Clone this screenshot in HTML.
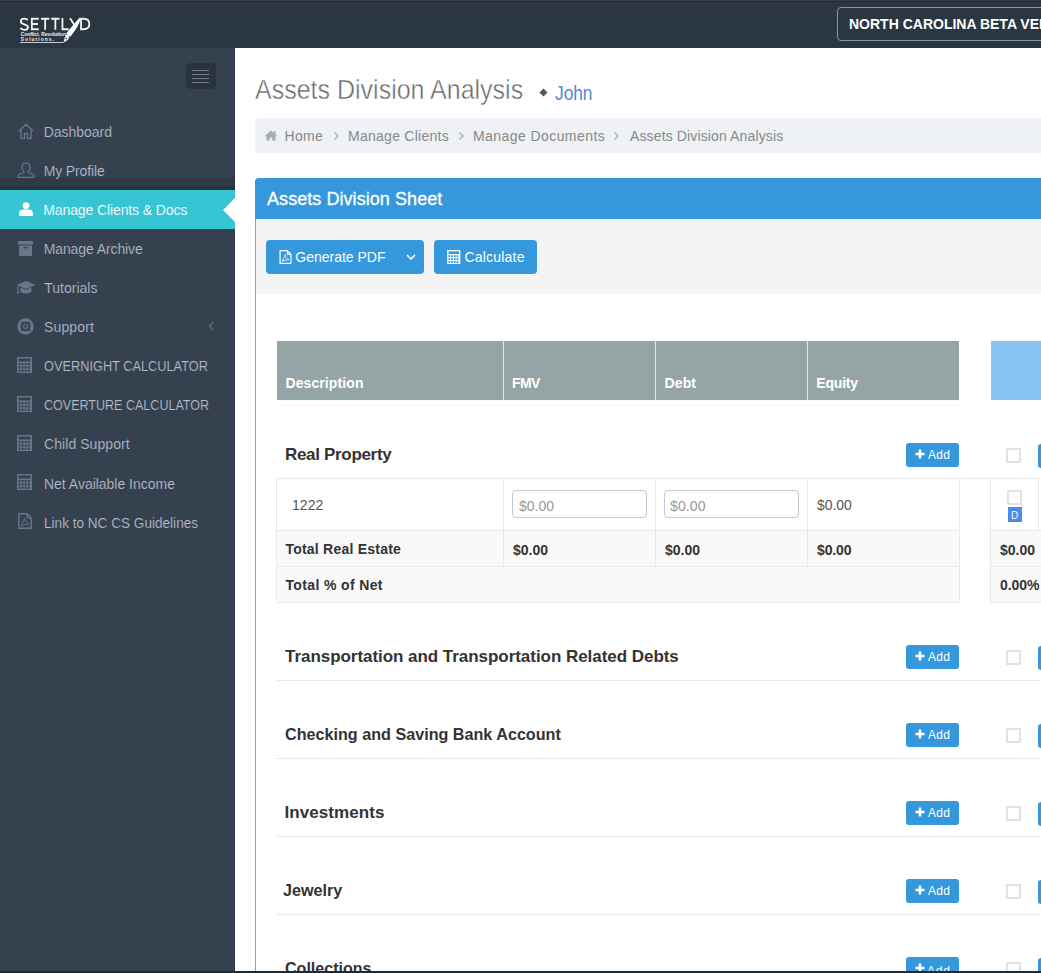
<!DOCTYPE html>
<html><head><meta charset="utf-8">
<style>
*{box-sizing:border-box;margin:0;padding:0}
html,body{width:1041px;height:973px;overflow:hidden;background:#fff}
body{position:relative;font-family:"Liberation Sans",sans-serif;font-size:14px;color:#333}
.a{position:absolute}
.t{position:absolute;white-space:nowrap;line-height:1}
svg{position:absolute;overflow:visible}
.hl{position:absolute;height:1px;background:#e8e9eb}
.vl{position:absolute;width:1px;background:#e8e9eb}
.btn{position:absolute;background:#3598dc;border-radius:4px}
.th{position:absolute;background:#95a5a6;top:341px;height:59px}
.thl{position:absolute;top:341px;height:59px;width:1px;background:#e4ebeb}
.add{position:absolute;left:906px;width:53px;height:24px;background:#3598dc;border-radius:3px}
.cb{position:absolute;width:15px;height:15px;border:2px solid #e2e2e2;background:#fff}
.bb{position:absolute;left:1038px;width:12px;height:24px;background:#3598dc;border-radius:3px}
.inp{position:absolute;width:135px;height:28px;border:1px solid #c2cad8;border-radius:4px;background:#fff}

</style></head>
<body>
<div class="a" style="left:0;top:0;width:1041px;height:48px;background:#2a3641"></div>
<div class="a" style="left:0;top:0;width:1041px;height:1px;background:#383c45"></div>
<div class="a" style="left:0;top:1px;width:1041px;height:1px;background:#24292f"></div>
<div class="a" style="left:0;top:2px;width:1041px;height:4px;background:#2f3640"></div>
<div class="a" style="left:837px;top:7px;width:260px;height:34px;border:1px solid #8d959e;border-radius:4px"></div>
<svg style="left:0;top:0" width="100" height="48">
<g stroke="#f2f4f6" stroke-width="1.8" fill="none">
<path d="M27.8 20.2 C26.8 19 25.5 18.6 24.2 18.6 C22 18.6 20.8 19.9 20.8 21.5 C20.8 23.2 22.3 23.8 24.3 24.3 C26.6 24.9 28 25.6 28 27.2 C28 28.8 26.5 29.8 24.3 29.8 C22.6 29.8 21.2 29.1 20.3 28"/>
<path d="M38.7 18.75 H31.85 V29.25 H38.7 M31.85 24 H38"/>
<path d="M41 18.75 H49.3 M45.15 18.75 V29.7"/>
<path d="M51.2 18.75 H59.5 M55.35 18.75 V29.7"/>
<path d="M62.45 18 V29.25 H68.6"/>
<path d="M70 18.2 L74.6 25.2"/>
<path d="M81.05 18.75 V29.25 H83.5 C87.2 29.25 89.3 27 89.3 24 C89.3 21 87.2 18.75 83.5 18.75 Z"/>
</g>
<path d="M79.3 17.8 L80.6 18.5 C80 22 77.5 28 70.6 36.4 L66.1 33.7 C71 27.5 77 21 79.3 17.8 Z" fill="#fff"/>
<path d="M66.8 34.2 L69.6 36.2 L68 39.8 L63.3 42.8 L64.8 37.5 Z" fill="#fff"/>
<circle cx="66.3" cy="38.5" r="0.8" fill="#2a3641"/>
<text x="20.8" y="35.8" font-family="Liberation Sans" font-size="4.9" font-weight="bold" fill="#f0f2f4" letter-spacing="-0.05">Conflict. Resolution.</text>
<text x="20.8" y="40.7" font-family="Liberation Sans" font-size="4.9" font-weight="bold" fill="#f0f2f4" letter-spacing="1.05">Solutions.</text>
<rect x="20" y="42" width="43.5" height="0.9" fill="#d9dde2"/>
</svg>
<div class="a" style="left:0;top:48px;width:235px;height:925px;background:#364150"></div>
<div class="a" style="left:234px;top:48px;width:1px;height:925px;background:#2f3946"></div>
<div class="a" style="left:186px;top:63px;width:30px;height:26px;background:#2a3441;border-radius:4px"></div>
<div class="a" style="left:192px;top:70px;width:17px;height:1px;background:#737e8c"></div>
<div class="a" style="left:192px;top:74px;width:17px;height:1px;background:#737e8c"></div>
<div class="a" style="left:192px;top:78px;width:17px;height:1px;background:#737e8c"></div>
<div class="a" style="left:192px;top:82px;width:17px;height:1px;background:#737e8c"></div>
<div class="a" style="left:0;top:177px;width:235px;height:9px;background:#303a47"></div>
<div class="a" style="left:0;top:186px;width:235px;height:4px;background:#29333f"></div>
<div class="a" style="left:0;top:190px;width:235px;height:39px;background:#36c6d3"></div>
<div class="a" style="left:0;top:229px;width:235px;height:1px;background:#2b4a58"></div>
<svg style="left:222px;top:198px" width="13" height="24"><path d="M13 0 L1 12 L13 24 Z" fill="#fff"/></svg>
<svg style="left:18px;top:123px" width="16" height="16"><path d="M1 8 L8 1.2 L15 8 M3 6.5 V15.3 H6.5 V10.5 H9.5 V15.3 H13 V6.5" stroke="#6a7686" stroke-width="1.3" fill="none"/></svg>
<svg style="left:17px;top:162px" width="18" height="16"><path d="M9 1 C6.3 1 5 3 5 5.3 C5 7.5 6 9 7 9.8 L7 10.5 C3.5 11.2 1 12.3 1 14.5 V15.3 H17 V14.5 C17 12.3 14.5 11.2 11 10.5 L11 9.8 C12 9 13 7.5 13 5.3 C13 3 11.7 1 9 1 Z" stroke="#6a7686" stroke-width="1.2" fill="none"/></svg>
<svg style="left:19px;top:202px" width="14" height="14"><circle cx="7" cy="3.6" r="3.4" fill="#fff"/><path d="M0 14 V11.2 C0 8.8 2 7.4 4.2 7.4 H9.8 C12 7.4 14 8.8 14 11.2 V14 Z" fill="#fff"/></svg>
<svg style="left:17.5px;top:241px" width="15" height="15"><rect x="0" y="0" width="15" height="3.5" fill="#6a7686"/><rect x="1" y="4.5" width="13" height="10.5" fill="#6a7686"/><rect x="5.5" y="6" width="4" height="1.3" fill="#364150"/></svg>
<svg style="left:16px;top:280px" width="20" height="15"><path d="M10 1 L19.5 5 L10 9 L0.5 5 Z" fill="#6a7686"/><path d="M4.5 7.5 V11 C4.5 12.5 7 13.5 10 13.5 C13 13.5 15.5 12.5 15.5 11 V7.5 L10 9.8 Z" fill="#6a7686"/><path d="M2 5.5 V11.5" stroke="#6a7686" stroke-width="1"/><circle cx="2" cy="12.5" r="1.2" fill="#6a7686"/></svg>
<svg style="left:16.5px;top:318px" width="17" height="17"><circle cx="8.5" cy="8.5" r="6.6" stroke="#6a7686" stroke-width="3.2" fill="none"/><circle cx="8.5" cy="8.5" r="2" stroke="#6a7686" stroke-width="1.2" fill="none"/><path d="M4 4 L6.5 6.5 M13 4 L10.5 6.5 M4 13 L6.5 10.5 M13 13 L10.5 10.5" stroke="#364150" stroke-width="1.4"/></svg>
<svg style="left:208px;top:321px" width="7" height="10"><path d="M5.5 1 L1.5 5 L5.5 9" stroke="#606c7b" stroke-width="1.3" fill="none"/></svg>
<svg style="left:17px;top:357px" width="15" height="16"><rect x="0" y="0" width="15" height="16" fill="#6a7686"/><rect x="1.5" y="1.5" width="12" height="3" fill="#364150"/><rect x="1.5" y="6.0" width="2" height="2.2" fill="#364150"/><rect x="4.6" y="6.0" width="2" height="2.2" fill="#364150"/><rect x="7.7" y="6.0" width="2" height="2.2" fill="#364150"/><rect x="10.8" y="6.0" width="2" height="2.2" fill="#364150"/><rect x="1.5" y="9.3" width="2" height="2.2" fill="#364150"/><rect x="4.6" y="9.3" width="2" height="2.2" fill="#364150"/><rect x="7.7" y="9.3" width="2" height="2.2" fill="#364150"/><rect x="10.8" y="9.3" width="2" height="2.2" fill="#364150"/><rect x="1.5" y="12.6" width="2" height="2.2" fill="#364150"/><rect x="4.6" y="12.6" width="2" height="2.2" fill="#364150"/><rect x="7.7" y="12.6" width="2" height="2.2" fill="#364150"/><rect x="10.8" y="12.6" width="2" height="2.2" fill="#364150"/></svg>
<svg style="left:17px;top:396px" width="15" height="16"><rect x="0" y="0" width="15" height="16" fill="#6a7686"/><rect x="1.5" y="1.5" width="12" height="3" fill="#364150"/><rect x="1.5" y="6.0" width="2" height="2.2" fill="#364150"/><rect x="4.6" y="6.0" width="2" height="2.2" fill="#364150"/><rect x="7.7" y="6.0" width="2" height="2.2" fill="#364150"/><rect x="10.8" y="6.0" width="2" height="2.2" fill="#364150"/><rect x="1.5" y="9.3" width="2" height="2.2" fill="#364150"/><rect x="4.6" y="9.3" width="2" height="2.2" fill="#364150"/><rect x="7.7" y="9.3" width="2" height="2.2" fill="#364150"/><rect x="10.8" y="9.3" width="2" height="2.2" fill="#364150"/><rect x="1.5" y="12.6" width="2" height="2.2" fill="#364150"/><rect x="4.6" y="12.6" width="2" height="2.2" fill="#364150"/><rect x="7.7" y="12.6" width="2" height="2.2" fill="#364150"/><rect x="10.8" y="12.6" width="2" height="2.2" fill="#364150"/></svg>
<svg style="left:17px;top:435px" width="15" height="16"><rect x="0" y="0" width="15" height="16" fill="#6a7686"/><rect x="1.5" y="1.5" width="12" height="3" fill="#364150"/><rect x="1.5" y="6.0" width="2" height="2.2" fill="#364150"/><rect x="4.6" y="6.0" width="2" height="2.2" fill="#364150"/><rect x="7.7" y="6.0" width="2" height="2.2" fill="#364150"/><rect x="10.8" y="6.0" width="2" height="2.2" fill="#364150"/><rect x="1.5" y="9.3" width="2" height="2.2" fill="#364150"/><rect x="4.6" y="9.3" width="2" height="2.2" fill="#364150"/><rect x="7.7" y="9.3" width="2" height="2.2" fill="#364150"/><rect x="10.8" y="9.3" width="2" height="2.2" fill="#364150"/><rect x="1.5" y="12.6" width="2" height="2.2" fill="#364150"/><rect x="4.6" y="12.6" width="2" height="2.2" fill="#364150"/><rect x="7.7" y="12.6" width="2" height="2.2" fill="#364150"/><rect x="10.8" y="12.6" width="2" height="2.2" fill="#364150"/></svg>
<svg style="left:17px;top:474px" width="15" height="16"><rect x="0" y="0" width="15" height="16" fill="#6a7686"/><rect x="1.5" y="1.5" width="12" height="3" fill="#364150"/><rect x="1.5" y="6.0" width="2" height="2.2" fill="#364150"/><rect x="4.6" y="6.0" width="2" height="2.2" fill="#364150"/><rect x="7.7" y="6.0" width="2" height="2.2" fill="#364150"/><rect x="10.8" y="6.0" width="2" height="2.2" fill="#364150"/><rect x="1.5" y="9.3" width="2" height="2.2" fill="#364150"/><rect x="4.6" y="9.3" width="2" height="2.2" fill="#364150"/><rect x="7.7" y="9.3" width="2" height="2.2" fill="#364150"/><rect x="10.8" y="9.3" width="2" height="2.2" fill="#364150"/><rect x="1.5" y="12.6" width="2" height="2.2" fill="#364150"/><rect x="4.6" y="12.6" width="2" height="2.2" fill="#364150"/><rect x="7.7" y="12.6" width="2" height="2.2" fill="#364150"/><rect x="10.8" y="12.6" width="2" height="2.2" fill="#364150"/></svg>
<svg style="left:18px;top:513px" width="14" height="16" viewBox="0 0 14 16"><path d="M0.8 0.8 H9 L13.2 5 V15.2 H0.8 Z" stroke="#6a7686" stroke-width="1.4" fill="none"/><path d="M9 0.8 V5 H13.2" stroke="#6a7686" stroke-width="1.2" fill="none"/><path d="M3 13 C4 11 6 8 6.5 5.5 C7 8 9 10.5 11 11 C9 11 6 11.8 3 13 Z" stroke="#6a7686" stroke-width="1" fill="none"/></svg>
<svg style="left:539px;top:88px" width="9" height="9"><path d="M4.5 0.5 L8.5 4.5 L4.5 8.5 L0.5 4.5 Z" fill="#555"/></svg>
<div class="a" style="left:255px;top:118px;width:820px;height:35px;background:#eef1f5;border-radius:4px"></div>
<svg style="left:265px;top:130px" width="13" height="11"><path d="M6 0.6 L12 5.8 L10.6 5.8 L10.6 10.6 L7.3 10.6 L7.3 7.6 L4.7 7.6 L4.7 10.6 L1.4 10.6 L1.4 5.8 L0 5.8 Z" fill="#aaa"/><rect x="8.6" y="1.2" width="2" height="3.2" fill="#aaa"/></svg>
<svg style="left:333px;top:131px" width="7" height="10"><path d="M1.5 1.5 L5 5 L1.5 8.5" stroke="#aaa" stroke-width="1.2" fill="none"/></svg>
<svg style="left:458px;top:131px" width="7" height="10"><path d="M1.5 1.5 L5 5 L1.5 8.5" stroke="#aaa" stroke-width="1.2" fill="none"/></svg>
<svg style="left:613px;top:131px" width="7" height="10"><path d="M1.5 1.5 L5 5 L1.5 8.5" stroke="#aaa" stroke-width="1.2" fill="none"/></svg>
<div class="a" style="left:255px;top:178px;width:820px;height:820px;border:1px solid #8ea4b7;border-radius:4px 4px 0 0"></div>
<div class="a" style="left:255px;top:178px;width:820px;height:41px;background:#3598dc;border-radius:4px 4px 0 0"></div>
<div class="a" style="left:256px;top:219px;width:820px;height:75px;background:#f4f4f4"></div>
<div class="btn" style="left:266px;top:240px;width:158px;height:34px"></div>
<div class="btn" style="left:434px;top:240px;width:103px;height:34px"></div>
<svg style="left:279px;top:250px" width="13" height="14" viewBox="0 0 14 16"><path d="M0.8 0.8 H9 L13.2 5 V15.2 H0.8 Z" stroke="#fff" stroke-width="1.4" fill="none"/><path d="M9 0.8 V5 H13.2" stroke="#fff" stroke-width="1.2" fill="none"/><path d="M3 13 C4 11 6 8 6.5 5.5 C7 8 9 10.5 11 11 C9 11 6 11.8 3 13 Z" stroke="#fff" stroke-width="1" fill="none"/></svg>
<svg style="left:406px;top:254px" width="10" height="7"><path d="M1 1 L5 5 L9 1" stroke="#fff" stroke-width="1.6" fill="none"/></svg>
<svg style="left:447px;top:250px" width="13.5" height="14" viewBox="0 0 15 16"><rect x="0" y="0" width="15" height="16" fill="#fff"/><rect x="1.5" y="1.5" width="12" height="3" fill="#3598dc"/><rect x="1.5" y="6.0" width="2" height="2.2" fill="#3598dc"/><rect x="4.6" y="6.0" width="2" height="2.2" fill="#3598dc"/><rect x="7.7" y="6.0" width="2" height="2.2" fill="#3598dc"/><rect x="10.8" y="6.0" width="2" height="2.2" fill="#3598dc"/><rect x="1.5" y="9.3" width="2" height="2.2" fill="#3598dc"/><rect x="4.6" y="9.3" width="2" height="2.2" fill="#3598dc"/><rect x="7.7" y="9.3" width="2" height="2.2" fill="#3598dc"/><rect x="10.8" y="9.3" width="2" height="2.2" fill="#3598dc"/><rect x="1.5" y="12.6" width="2" height="2.2" fill="#3598dc"/><rect x="4.6" y="12.6" width="2" height="2.2" fill="#3598dc"/><rect x="7.7" y="12.6" width="2" height="2.2" fill="#3598dc"/><rect x="10.8" y="12.6" width="2" height="2.2" fill="#3598dc"/></svg>
<div class="th" style="left:277px;width:682px"></div>
<div class="thl" style="left:503px"></div>
<div class="thl" style="left:655px"></div>
<div class="thl" style="left:807px"></div>
<div class="a" style="left:991px;top:341px;width:60px;height:59px;background:#89c4f4"></div>
<div class="a" style="left:280px;top:405px;width:679px;height:1px;background:#f6f7f8"></div>
<div class="a" style="left:277px;top:530px;width:682px;height:72px;background:#f9f9f9"></div>
<div class="a" style="left:991px;top:530px;width:60px;height:72px;background:#f9f9f9"></div>
<div class="hl" style="left:276px;top:478px;width:764px"></div>
<div class="hl" style="left:276px;top:530px;width:682px"></div>
<div class="hl" style="left:991px;top:530px;width:60px"></div>
<div class="hl" style="left:276px;top:566px;width:682px"></div>
<div class="hl" style="left:991px;top:566px;width:60px"></div>
<div class="hl" style="left:276px;top:602px;width:682px"></div>
<div class="hl" style="left:991px;top:602px;width:60px"></div>
<div class="vl" style="left:276px;top:478px;height:125px"></div>
<div class="vl" style="left:503px;top:478px;height:88px"></div>
<div class="vl" style="left:655px;top:478px;height:88px"></div>
<div class="vl" style="left:807px;top:478px;height:88px"></div>
<div class="vl" style="left:959px;top:478px;height:125px"></div>
<div class="vl" style="left:990px;top:478px;height:125px"></div>
<div class="vl" style="left:1038px;top:478px;height:52px"></div>
<div class="inp" style="left:512px;top:490px"></div>
<div class="inp" style="left:664px;top:490px"></div>
<div class="cb" style="left:1007px;top:490px"></div>
<div class="a" style="left:1008px;top:507px;width:14px;height:15px;background:#4a8ae8"></div>
<div class="add" style="top:443px"></div>
<svg style="left:915px;top:449px" width="10" height="10"><path d="M5 0.5 V9.5 M0.5 5 H9.5" stroke="#fff" stroke-width="2.6"/></svg>
<div class="cb" style="left:1006px;top:448px"></div>
<div class="bb" style="top:444px"></div>
<div class="add" style="top:645px"></div>
<svg style="left:915px;top:651px" width="10" height="10"><path d="M5 0.5 V9.5 M0.5 5 H9.5" stroke="#fff" stroke-width="2.6"/></svg>
<div class="cb" style="left:1006px;top:650px"></div>
<div class="bb" style="top:646px"></div>
<div class="add" style="top:723px"></div>
<svg style="left:915px;top:729px" width="10" height="10"><path d="M5 0.5 V9.5 M0.5 5 H9.5" stroke="#fff" stroke-width="2.6"/></svg>
<div class="cb" style="left:1006px;top:728px"></div>
<div class="bb" style="top:724px"></div>
<div class="add" style="top:801px"></div>
<svg style="left:915px;top:807px" width="10" height="10"><path d="M5 0.5 V9.5 M0.5 5 H9.5" stroke="#fff" stroke-width="2.6"/></svg>
<div class="cb" style="left:1006px;top:806px"></div>
<div class="bb" style="top:802px"></div>
<div class="add" style="top:879px"></div>
<svg style="left:915px;top:885px" width="10" height="10"><path d="M5 0.5 V9.5 M0.5 5 H9.5" stroke="#fff" stroke-width="2.6"/></svg>
<div class="cb" style="left:1006px;top:884px"></div>
<div class="bb" style="top:880px"></div>
<div class="add" style="top:957px"></div>
<svg style="left:915px;top:963px" width="10" height="10"><path d="M5 0.5 V9.5 M0.5 5 H9.5" stroke="#fff" stroke-width="2.6"/></svg>
<div class="cb" style="left:1006px;top:962px"></div>
<div class="bb" style="top:958px"></div>
<div class="hl" style="left:276px;top:680px;width:764px"></div>
<div class="hl" style="left:276px;top:758px;width:764px"></div>
<div class="hl" style="left:276px;top:836px;width:764px"></div>
<div class="hl" style="left:276px;top:914px;width:764px"></div>

<div class="t" id="beta" style="left:849.00px;top:17.00px;font-size:14px;font-weight:bold;color:#fff;letter-spacing:0.000px;transform-origin:0 0;transform:scaleX(1.0000);">NORTH CAROLINA BETA VERSION</div>
<div class="t" id="s0" style="left:43.64px;top:125.05px;font-size:14px;font-weight:normal;color:#b4bcc8;letter-spacing:-0.025px;transform-origin:0 0;transform:scaleX(1.0000);-webkit-text-stroke:0.15px #364150">Dashboard</div>
<div class="t" id="s1" style="left:43.64px;top:164.00px;font-size:14px;font-weight:normal;color:#b4bcc8;letter-spacing:-0.111px;transform-origin:0 0;transform:scaleX(1.0000);-webkit-text-stroke:0.15px #364150">My Profile</div>
<div class="t" id="s2" style="left:43.28px;top:203.00px;font-size:14px;font-weight:normal;color:#fff;letter-spacing:-0.110px;transform-origin:0 0;transform:scaleX(1.0000);-webkit-text-stroke:0.15px #36c6d3">Manage Clients &amp; Docs</div>
<div class="t" id="s3" style="left:43.64px;top:242.00px;font-size:14px;font-weight:normal;color:#b4bcc8;letter-spacing:-0.095px;transform-origin:0 0;transform:scaleX(1.0000);-webkit-text-stroke:0.15px #364150">Manage Archive</div>
<div class="t" id="s4" style="left:44.28px;top:281.00px;font-size:14px;font-weight:normal;color:#b4bcc8;letter-spacing:-0.006px;transform-origin:0 0;transform:scaleX(1.0000);-webkit-text-stroke:0.15px #364150">Tutorials</div>
<div class="t" id="s5" style="left:44.00px;top:320.00px;font-size:14px;font-weight:normal;color:#b4bcc8;letter-spacing:0.149px;transform-origin:0 0;transform:scaleX(1.0000);-webkit-text-stroke:0.15px #364150">Support</div>
<div class="t" id="s6" style="left:44.00px;top:359.00px;font-size:14px;font-weight:normal;color:#b4bcc8;letter-spacing:0.000px;transform-origin:0 0;transform:scaleX(0.9119);-webkit-text-stroke:0.15px #364150">OVERNIGHT CALCULATOR</div>
<div class="t" id="s7" style="left:44.00px;top:398.00px;font-size:14px;font-weight:normal;color:#b4bcc8;letter-spacing:0.000px;transform-origin:0 0;transform:scaleX(0.8954);-webkit-text-stroke:0.15px #364150">COVERTURE CALCULATOR</div>
<div class="t" id="s8" style="left:44.00px;top:437.00px;font-size:14px;font-weight:normal;color:#b4bcc8;letter-spacing:0.069px;transform-origin:0 0;transform:scaleX(1.0000);-webkit-text-stroke:0.15px #364150">Child Support</div>
<div class="t" id="s9" style="left:44.00px;top:476.50px;font-size:14px;font-weight:normal;color:#b4bcc8;letter-spacing:-0.018px;transform-origin:0 0;transform:scaleX(1.0000);-webkit-text-stroke:0.15px #364150">Net Available Income</div>
<div class="t" id="s10" style="left:44.00px;top:515.50px;font-size:14px;font-weight:normal;color:#b4bcc8;letter-spacing:0.000px;transform-origin:0 0;transform:scaleX(0.9704);-webkit-text-stroke:0.15px #364150">Link to NC CS Guidelines</div>
<div class="t" id="title" style="left:255.00px;top:75.50px;font-size:27.5px;font-weight:normal;color:#666;letter-spacing:0.000px;transform-origin:0 0;transform:scaleX(0.9091);-webkit-text-stroke:0.5px #fff">Assets Division Analysis</div>
<div class="t" id="john" style="left:555.00px;top:84.00px;font-size:19.5px;font-weight:normal;color:#5087d8;letter-spacing:0.000px;transform-origin:0 0;transform:scaleX(0.8864);">John</div>
<div class="t" id="bc0" style="left:284.52px;top:129.00px;font-size:14px;font-weight:normal;color:#888;letter-spacing:0.334px;transform-origin:0 0;transform:scaleX(1.0000);">Home</div>
<div class="t" id="bc1" style="left:348.00px;top:129.00px;font-size:14px;font-weight:normal;color:#888;letter-spacing:0.269px;transform-origin:0 0;transform:scaleX(1.0000);">Manage Clients</div>
<div class="t" id="bc2" style="left:473.00px;top:129.00px;font-size:14px;font-weight:normal;color:#888;letter-spacing:0.427px;transform-origin:0 0;transform:scaleX(1.0000);">Manage Documents</div>
<div class="t" id="bc3" style="left:630.00px;top:129.00px;font-size:14px;font-weight:normal;color:#888;letter-spacing:0.130px;transform-origin:0 0;transform:scaleX(1.0000);">Assets Division Analysis</div>
<div class="t" id="ptitle" style="left:267.00px;top:189.50px;font-size:18px;font-weight:normal;color:#fff;letter-spacing:0.060px;transform-origin:0 0;transform:scaleX(1.0000);-webkit-text-stroke:0.3px #fff">Assets Division Sheet</div>
<div class="t" id="gen" style="left:295.36px;top:249.50px;font-size:14px;font-weight:normal;color:#fff;letter-spacing:-0.013px;transform-origin:0 0;transform:scaleX(1.0000);">Generate PDF</div>
<div class="t" id="calc" style="left:464.48px;top:250.11px;font-size:14px;font-weight:normal;color:#fff;letter-spacing:0.200px;transform-origin:0 0;transform:scaleX(1.0000);">Calculate</div>
<div class="t" id="th0" style="left:285.42px;top:376.00px;font-size:14px;font-weight:bold;color:#fff;letter-spacing:0.110px;transform-origin:0 0;transform:scaleX(1.0000);">Description</div>
<div class="t" id="th1" style="left:512.00px;top:376.00px;font-size:14px;font-weight:bold;color:#fff;letter-spacing:-0.600px;transform-origin:0 0;transform:scaleX(1.0000);">FMV</div>
<div class="t" id="th2" style="left:664.42px;top:376.00px;font-size:14px;font-weight:bold;color:#fff;letter-spacing:0.167px;transform-origin:0 0;transform:scaleX(1.0000);">Debt</div>
<div class="t" id="th3" style="left:816.36px;top:376.00px;font-size:14px;font-weight:bold;color:#fff;letter-spacing:-0.220px;transform-origin:0 0;transform:scaleX(1.0000);">Equity</div>
<div class="t" id="rp" style="left:285.00px;top:446.00px;font-size:17px;font-weight:bold;color:#333;letter-spacing:-0.319px;transform-origin:0 0;transform:scaleX(1.0000);">Real Property</div>
<div class="t" id="r1222" style="left:292.00px;top:497.50px;font-size:14px;font-weight:normal;color:#555;letter-spacing:0.032px;transform-origin:0 0;transform:scaleX(1.0000);">1222</div>
<div class="t" id="ph0" style="left:519.00px;top:499.00px;font-size:14px;font-weight:normal;color:#999;letter-spacing:0.000px;transform-origin:0 0;transform:scaleX(1.0000);">$0.00</div>
<div class="t" id="ph1" style="left:670.00px;top:499.00px;font-size:14px;font-weight:normal;color:#999;letter-spacing:0.125px;transform-origin:0 0;transform:scaleX(1.0000);">$0.00</div>
<div class="t" id="eq" style="left:817.00px;top:498.00px;font-size:14px;font-weight:normal;color:#555;letter-spacing:-0.050px;transform-origin:0 0;transform:scaleX(1.0000);">$0.00</div>
<div class="t" id="D" style="left:1011.00px;top:510.50px;font-size:10px;font-weight:normal;color:#fff;letter-spacing:0.000px;transform-origin:0 0;transform:scaleX(1.0000);">D</div>
<div class="t" id="tre" style="left:285.40px;top:541.99px;font-size:14px;font-weight:bold;color:#333;letter-spacing:0.231px;transform-origin:0 0;transform:scaleX(1.0000);">Total Real Estate</div>
<div class="t" id="tv0" style="left:513.00px;top:542.50px;font-size:14px;font-weight:bold;color:#333;letter-spacing:0.000px;transform-origin:0 0;transform:scaleX(1.0000);">$0.00</div>
<div class="t" id="tv1" style="left:665.00px;top:542.50px;font-size:14px;font-weight:bold;color:#333;letter-spacing:0.000px;transform-origin:0 0;transform:scaleX(1.0000);">$0.00</div>
<div class="t" id="tv2" style="left:817.00px;top:542.50px;font-size:14px;font-weight:bold;color:#333;letter-spacing:-0.125px;transform-origin:0 0;transform:scaleX(1.0000);">$0.00</div>
<div class="t" id="tv3" style="left:1000.00px;top:542.50px;font-size:14px;font-weight:bold;color:#333;letter-spacing:0.000px;transform-origin:0 0;transform:scaleX(1.0000);">$0.00</div>
<div class="t" id="tpn" style="left:285.40px;top:577.99px;font-size:14px;font-weight:bold;color:#333;letter-spacing:0.368px;transform-origin:0 0;transform:scaleX(1.0000);">Total % of Net</div>
<div class="t" id="pct" style="left:1000.00px;top:577.50px;font-size:14px;font-weight:bold;color:#333;letter-spacing:-0.050px;transform-origin:0 0;transform:scaleX(1.0000);">0.00%</div>
<div class="t" id="sec0" style="left:285.00px;top:647.70px;font-size:17px;font-weight:bold;color:#333;letter-spacing:-0.043px;transform-origin:0 0;transform:scaleX(1.0000);">Transportation and Transportation Related Debts</div>
<div class="t" id="sec1" style="left:285.00px;top:725.70px;font-size:17px;font-weight:bold;color:#333;letter-spacing:0.000px;transform-origin:0 0;transform:scaleX(0.9502);">Checking and Saving Bank Account</div>
<div class="t" id="sec2" style="left:284.48px;top:804.20px;font-size:17px;font-weight:bold;color:#333;letter-spacing:0.070px;transform-origin:0 0;transform:scaleX(1.0000);">Investments</div>
<div class="t" id="sec3" style="left:283.00px;top:881.70px;font-size:17px;font-weight:bold;color:#333;letter-spacing:0.000px;transform-origin:0 0;transform:scaleX(0.9494);">Jewelry</div>
<div class="t" id="sec4" style="left:285.00px;top:960.20px;font-size:17px;font-weight:bold;color:#333;letter-spacing:0.000px;transform-origin:0 0;transform:scaleX(0.9437);">Collections</div>
<div class="t" id="add0" style="left:928.00px;top:448.50px;font-size:12px;font-weight:normal;color:#fff;letter-spacing:0.250px;transform-origin:0 0;transform:scaleX(1.0000);">Add</div>
<div class="t" id="add1" style="left:928.00px;top:650.50px;font-size:12px;font-weight:normal;color:#fff;letter-spacing:0.250px;transform-origin:0 0;transform:scaleX(1.0000);">Add</div>
<div class="t" id="add2" style="left:928.00px;top:728.50px;font-size:12px;font-weight:normal;color:#fff;letter-spacing:0.250px;transform-origin:0 0;transform:scaleX(1.0000);">Add</div>
<div class="t" id="add3" style="left:928.00px;top:806.50px;font-size:12px;font-weight:normal;color:#fff;letter-spacing:0.250px;transform-origin:0 0;transform:scaleX(1.0000);">Add</div>
<div class="t" id="add4" style="left:928.00px;top:884.50px;font-size:12px;font-weight:normal;color:#fff;letter-spacing:0.250px;transform-origin:0 0;transform:scaleX(1.0000);">Add</div>
<div class="t" id="add5" style="left:927.00px;top:964.50px;font-size:12px;font-weight:normal;color:#fff;letter-spacing:0.750px;transform-origin:0 0;transform:scaleX(1.0000);">Add</div>
<div class="a" style="left:0;top:971px;width:1041px;height:2px;background:#1f2a36"></div>
</body></html>
